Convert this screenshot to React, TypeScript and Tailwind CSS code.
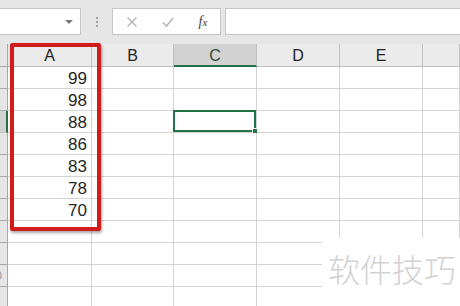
import React from "react";

const columns = [
  { label: "A", width: "w-[84px]" },
  { label: "B", width: "w-[82px]" },
  { label: "C", width: "w-[83px]" },
  { label: "D", width: "w-[83px]" },
  { label: "E", width: "w-[83px]" },
  { label: "", width: "w-[37px]" },
];

const scores = [99, 98, 88, 86, 83, 78, 70];
const rows = Array.from({ length: 11 }, (_, i) => i + 1);

function Toolbar() {
  return (
    <div className="h-[44px] bg-[#e6e6e6] flex items-start pt-[8px]">
      {/* name box */}
      <div className="w-[81px] h-[27px] bg-white border border-l-0 border-[#c6c6c6] flex items-center justify-end pr-[7px]">
        <div className="w-0 h-0 border-l-[4px] border-r-[4px] border-t-[4px] border-l-transparent border-r-transparent border-t-[#7a7a7a]" />
      </div>
      <div className="w-[31px] h-[27px] flex flex-col items-center justify-center gap-[2px]">
        <span className="w-[2px] h-[2px] bg-[#a0a0a0]" />
        <span className="w-[2px] h-[2px] bg-[#a0a0a0]" />
        <span className="w-[2px] h-[2px] bg-[#a0a0a0]" />
      </div>
      {/* cancel / enter / fx */}
      <div className="w-[109px] h-[27px] bg-white border border-[#c6c6c6] flex items-center">
        <svg width="36" height="25" viewBox="0 0 36 25" className="ml-[1px]">
          <path d="M13.5 8.5 L22.5 17.5 M22.5 8.5 L13.5 17.5" stroke="#b4b4b4" strokeWidth="1.4" fill="none" />
        </svg>
        <svg width="36" height="25" viewBox="0 0 36 25">
          <path d="M13 13.5 L16.5 17 L23 9" stroke="#b4b4b4" strokeWidth="1.6" fill="none" />
        </svg>
        <span className="w-[34px] text-center text-[14px] italic text-[#404040] [font-family:'Liberation_Serif',serif]">
          f<span className="text-[11px]">x</span>
        </span>
      </div>
      <div className="ml-[4px] flex-1 h-[27px] bg-white border border-r-0 border-[#c6c6c6]" />
    </div>
  );
}

function HeaderRow() {
  return (
    <div className="flex h-[23px]">
      <div className="w-[8px] bg-[#e6e6e6] border-r border-b border-[#a8a8a8]" />
      {columns.map((c) =>
        c.label === "C" ? (
          <div
            key="C"
            className={`${c.width} bg-[#d2d2d2] border-r border-[#c0c0c0] border-b-2 border-b-[#217346] flex items-center justify-center text-[16px] text-[#2f4a38] pt-[2px]`}
          >
            {c.label}
          </div>
        ) : (
          <div
            key={c.label || "F"}
            className={`${c.width} bg-[#ebebeb] border-r border-b border-[#c0c0c0] flex items-center justify-center text-[16px] text-[#222] pt-[2px]`}
          >
            {c.label}
          </div>
        )
      )}
    </div>
  );
}

function Row({ n }: { n: number }) {
  const value = scores[n - 1];
  const selectedRow = n === 3;
  return (
    <div className="flex h-[22px]">
      <div
        className={
          selectedRow
            ? "w-[8px] bg-[#d2d2d2] border-b border-[#c0c0c0] border-r-2 border-r-[#217346]"
            : "w-[8px] bg-[#e6e6e6] border-r border-b border-[#a8a8a8] overflow-hidden flex items-center justify-end"
        }
      >
        {n === 10 && <span className="text-[12px] text-[#9a9a9a] mr-[5px] shrink-0">10</span>}
      </div>
      {columns.map((c) => (
        <div
          key={c.label || "F"}
          className={`${c.width} relative border-r border-b border-[#d4d4d4]`}
        >
          {c.label === "A" && value !== undefined && (
            <div className="h-full flex justify-end pr-[4px] pt-[3px] text-[17px] leading-[18px] text-[#262626]">
              {value}
            </div>
          )}
          {c.label === "C" && selectedRow && (
            <div className="absolute -left-[1px] -top-[1px] right-0 bottom-0 border-2 border-[#217346]">
              <div className="absolute -right-[4px] -bottom-[4px] w-[6px] h-[6px] bg-[#217346] border border-white" />
            </div>
          )}
        </div>
      ))}
    </div>
  );
}

export default function App() {
  return (
    <div className="relative w-[460px] h-[306px] overflow-hidden bg-white [font-family:'Liberation_Sans',Arial,sans-serif]">
      <Toolbar />
      <HeaderRow />
      {rows.map((n) => (
        <Row key={n} n={n} />
      ))}

      {/* red highlight around column A */}
      <div className="absolute left-[10px] top-[43px] w-[91px] h-[188px] border-[4px] border-[#d01c1c] rounded-[2px] shadow-[1px_2px_3px_rgba(0,0,0,0.35)]" />

      {/* watermark */}
      <div className="absolute left-[322px] top-[238px] right-0 bottom-0 bg-white flex items-start justify-end pt-[10px] pr-[4px]">
        <span className="text-[32px] leading-[40px] font-light text-[#d2d2d2] [font-family:'Noto_Sans_CJK_SC',sans-serif]">
          软件技巧
        </span>
      </div>
    </div>
  );
}
